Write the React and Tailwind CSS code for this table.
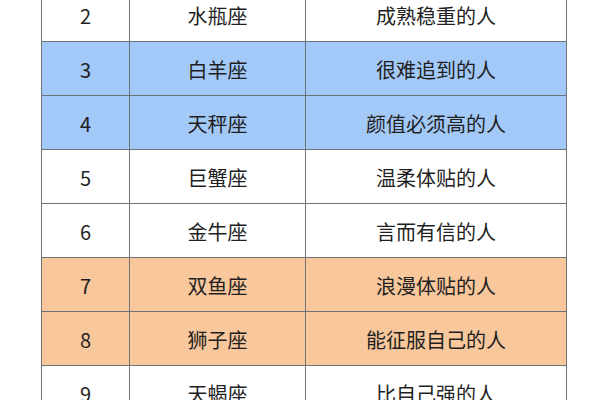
import React from "react";

const rows = [
  ["2", "水瓶座", "成熟稳重的人", "w"],
  ["3", "白羊座", "很难追到的人", "b"],
  ["4", "天秤座", "颜值必须高的人", "b"],
  ["5", "巨蟹座", "温柔体贴的人", "w"],
  ["6", "金牛座", "言而有信的人", "w"],
  ["7", "双鱼座", "浪漫体贴的人", "o"],
  ["8", "狮子座", "能征服自己的人", "o"],
  ["9", "天蝎座", "比自己强的人", "w"],
];

const bg = { w: "bg-white", b: "bg-[#a3c9f8]", o: "bg-[#f9c79c]" };

export default function App() {
  return (
    <div className="w-[600px] h-[400px] overflow-hidden bg-white" style={{ fontFamily: '"Noto Sans CJK SC", "Noto Sans", sans-serif' }}>
      <table className="ml-[41px] -mt-[13px] border-collapse text-[20px] text-[#1f1f1f]">
        <tbody>
          {rows.map((r) => (
            <tr key={r[0]} className={`h-[54px] ${bg[r[3]]}`}>
              <td className="w-[88px] border-[1.5px] border-[#6f7378] text-center p-0 pt-[2px]">{r[0]}</td>
              <td className="w-[176px] border-[1.5px] border-[#6f7378] text-center p-0 pt-[2px]">{r[1]}</td>
              <td className="w-[261px] border-[1.5px] border-[#6f7378] text-center p-0 pt-[2px]">{r[2]}</td>
            </tr>
          ))}
        </tbody>
      </table>
    </div>
  );
}
